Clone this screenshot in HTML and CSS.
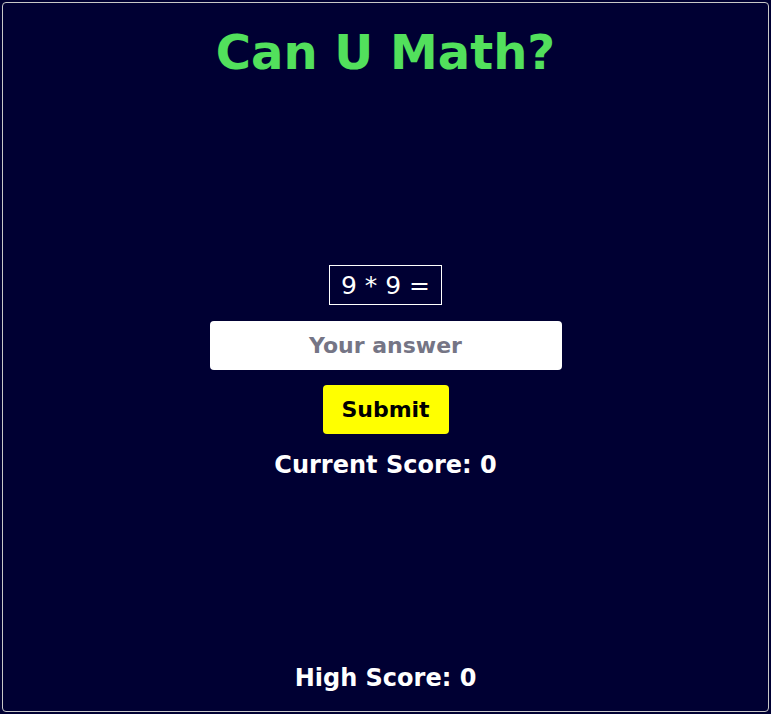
FILE: index.html
```html
<!DOCTYPE html>
<html lang="en">
<head>
<meta charset="utf-8">
<title>Can U Math?</title>
<link rel="stylesheet" href="styles.css">
</head>
<body>
<div class="app">
  <h1 class="title">Can U Math?</h1>
  <div class="game">
    <div class="question">9 * 9 =</div>
    <input class="answer" type="text" placeholder="Your answer">
    <button class="submit">Submit</button>
    <div class="score">Current Score: 0</div>
  </div>
  <div class="high">High Score: 0</div>
</div>
</body>
</html>
```
FILE: styles.css
```css
html, body {
  margin: 0;
  padding: 0;
  background: #000033;
}
body {
  padding: 2px;
  height: 714px;
  box-sizing: border-box;
  font-family: "DejaVu Sans", Verdana, sans-serif;
}
.app {
  box-sizing: border-box;
  height: 710px;
  border: 1px solid #c8c8c8;
  border-radius: 4px;
  background: #000033;
  display: flex;
  flex-direction: column;
  align-items: center;
  color: #fff;
}
.title {
  margin: 21px 0 0;
  font-size: 48px;
  line-height: 56px;
  font-weight: bold;
  color: #52e05c;
}
.game {
  margin-top: 185px;
  display: flex;
  flex-direction: column;
  align-items: center;
}
.question {
  box-sizing: border-box;
  border: 1px solid #fff;
  padding: 0 11px;
  height: 40px;
  line-height: 40px;
  font-size: 25px;
}
.answer {
  margin-top: 16px;
  box-sizing: border-box;
  width: 352px;
  height: 49px;
  border: none;
  border-radius: 4px;
  background: #fff;
  text-align: center;
  font-family: "DejaVu Sans", Verdana, sans-serif;
  font-weight: bold;
  font-size: 22px;
  outline: none;
}
.answer::placeholder {
  color: #757585;
}
.submit {
  margin-top: 15px;
  box-sizing: border-box;
  width: 126px;
  height: 49px;
  border: none;
  border-radius: 4px;
  background: #ffff00;
  color: #000;
  font-family: "DejaVu Sans", Verdana, sans-serif;
  font-weight: bold;
  font-size: 22px;
}
.score {
  margin-top: 16px;
  font-size: 24px;
  font-weight: bold;
  line-height: 30px;
}
.high {
  margin-top: auto;
  margin-bottom: 18px;
  font-size: 24px;
  font-weight: bold;
  line-height: 30px;
}
```
